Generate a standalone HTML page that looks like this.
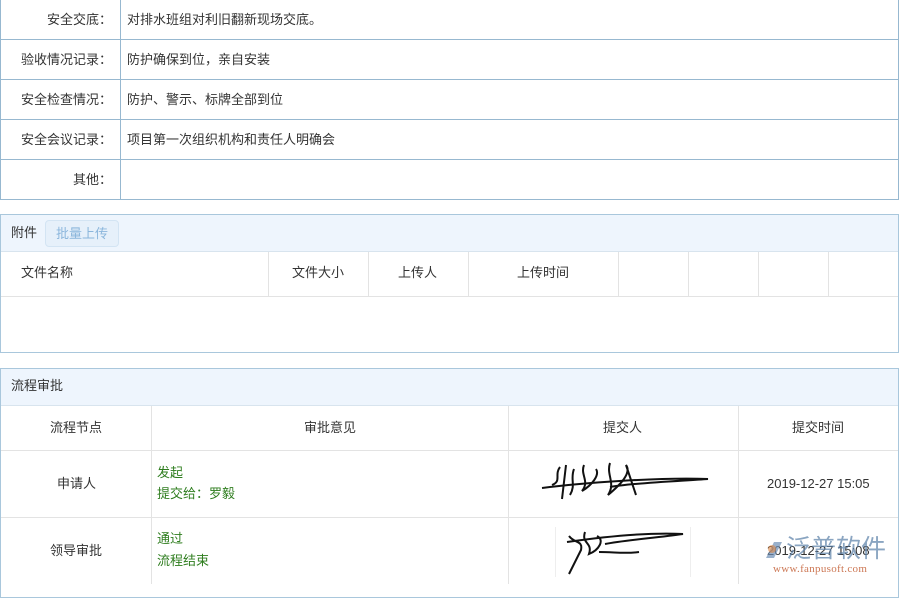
<!DOCTYPE html>
<html><head><meta charset="utf-8"><style>
*{margin:0;padding:0;box-sizing:border-box}
body{width:900px;height:584px;overflow:hidden;background:#fff;font-family:"Liberation Sans","Noto Sans CJK SC",sans-serif;font-size:13px;color:#333;position:relative}
.a{position:absolute}
.t{font-size:13px;line-height:16px;white-space:nowrap}
.hl{background:#97b8d0}
.gl{background:#e3e3e3}
.g{color:#2e7d1e}
</style></head><body>
<div class="a" style="left:0;top:0;width:899px;height:200px;border:1px solid #97b8d0;border-top:none"></div>
<div class="a hl" style="left:120px;top:0;width:1px;height:200px"></div>
<div class="a hl" style="left:0;top:39px;width:899px;height:1px"></div>
<div class="a hl" style="left:0;top:79px;width:899px;height:1px"></div>
<div class="a hl" style="left:0;top:119px;width:899px;height:1px"></div>
<div class="a hl" style="left:0;top:159px;width:899px;height:1px"></div>
<div class="a t" style="right:788px;top:12px">安全交底：</div>
<div class="a t" style="right:788px;top:52px">验收情况记录：</div>
<div class="a t" style="right:788px;top:92px">安全检查情况：</div>
<div class="a t" style="right:788px;top:132px">安全会议记录：</div>
<div class="a t" style="right:788px;top:172px">其他：</div>
<div class="a t" style="left:127px;top:12px">对排水班组对利旧翻新现场交底。</div>
<div class="a t" style="left:127px;top:52px">防护确保到位，亲自安装</div>
<div class="a t" style="left:127px;top:92px">防护、警示、标牌全部到位</div>
<div class="a t" style="left:127px;top:132px">项目第一次组织机构和责任人明确会</div>
<div class="a" style="left:0;top:214px;width:899px;height:139px;border:1px solid #a9c7dc"></div>
<div class="a" style="left:1px;top:215px;width:897px;height:36px;background:#eef5fd"></div>
<div class="a" style="left:1px;top:251px;width:897px;height:1px;background:#d8e4ee"></div>
<div class="a t" style="left:11px;top:225px">附件</div>
<div class="a t" style="left:45px;top:220px;width:74px;height:27px;line-height:25px;text-align:center;border:1px solid #d3e4f3;border-radius:4px;background:#e6f0fa;color:#8bb6dc">批量上传</div>
<div class="a gl" style="left:1px;top:296px;width:897px;height:1px"></div>
<div class="a gl" style="left:268px;top:252px;width:1px;height:44px"></div>
<div class="a gl" style="left:368px;top:252px;width:1px;height:44px"></div>
<div class="a gl" style="left:468px;top:252px;width:1px;height:44px"></div>
<div class="a gl" style="left:618px;top:252px;width:1px;height:44px"></div>
<div class="a gl" style="left:688px;top:252px;width:1px;height:44px"></div>
<div class="a gl" style="left:758px;top:252px;width:1px;height:44px"></div>
<div class="a gl" style="left:828px;top:252px;width:1px;height:44px"></div>
<div class="a t" style="left:21px;top:265px">文件名称</div>
<div class="a t" style="left:292px;top:265px">文件大小</div>
<div class="a t" style="left:398px;top:265px">上传人</div>
<div class="a t" style="left:517px;top:265px">上传时间</div>
<div class="a" style="left:0;top:368px;width:899px;height:230px;border:1px solid #a9c7dc"></div>
<div class="a" style="left:1px;top:369px;width:897px;height:36px;background:#eef5fd"></div>
<div class="a" style="left:1px;top:405px;width:897px;height:1px;background:#d8e4ee"></div>
<div class="a t" style="left:11px;top:378px">流程审批</div>
<div class="a gl" style="left:1px;top:450px;width:897px;height:1px"></div>
<div class="a gl" style="left:1px;top:517px;width:897px;height:1px"></div>
<div class="a gl" style="left:151px;top:406px;width:1px;height:178px"></div>
<div class="a gl" style="left:508px;top:406px;width:1px;height:178px"></div>
<div class="a gl" style="left:738px;top:406px;width:1px;height:178px"></div>
<div class="a t" style="left:50px;top:420px">流程节点</div>
<div class="a t" style="left:304px;top:420px">审批意见</div>
<div class="a t" style="left:603px;top:420px">提交人</div>
<div class="a t" style="left:792px;top:420px">提交时间</div>
<div class="a t" style="left:57px;top:476px">申请人</div>
<div class="a t" style="left:50px;top:543px">领导审批</div>
<div class="a t g" style="left:157px;top:465px">发起</div>
<div class="a t g" style="left:157px;top:486px">提交给：罗毅</div>
<div class="a t g" style="left:157px;top:531px">通过</div>
<div class="a t g" style="left:157px;top:553px">流程结束</div>
<div class="a t" style="left:767px;top:476px">2019-12-27 15:05</div>
<div class="a t" style="left:767px;top:543px">2019-12-27 15:08</div>
<div class="a" style="left:555px;top:527px;width:1px;height:50px;background:#eee"></div>
<div class="a" style="left:690px;top:527px;width:1px;height:50px;background:#eee"></div>
<svg class="a" style="left:540px;top:455px" width="175" height="55" viewBox="0 0 175 55" fill="none" stroke="#111" stroke-width="2">
<path d="M2 33 C40 28 120 22 168 24 C140 26 90 28 70 32"/>
<path d="M20 12 C14 20 22 26 12 30 M26 10 L22 44 M34 14 C30 24 36 30 30 40 M44 10 C40 20 50 26 42 36 C52 30 60 20 56 14 M70 8 C66 20 76 28 68 40 C80 30 92 18 86 10 L96 40"/>
</svg>
<svg class="a" style="left:555px;top:522px" width="140" height="55" viewBox="0 0 140 55" fill="none" stroke="#111" stroke-width="2">
<path d="M12 20 C40 16 90 10 128 12 C100 16 70 18 50 22"/>
<path d="M14 14 C20 22 28 18 26 28 L14 52 M30 10 C26 22 38 20 34 32 C44 28 50 18 42 14 M44 30 C60 30 70 32 84 30"/>
</svg>
<svg class="a" style="left:764px;top:540px" width="20" height="20" viewBox="0 0 20 20"><path d="M2 18 L10 2 L18 2 L10 18 Z" fill="#6d8fb5" opacity=".7"/><circle cx="8" cy="9" r="4" fill="#e08a4a" opacity=".6"/></svg>
<div class="a" style="left:786px;top:535px;font-size:25px;line-height:28px;color:#5a7fa8;opacity:.7">泛普软件</div>
<div class="a" style="left:773px;top:563px;font-size:11px;line-height:12px;color:#c0562a;opacity:.8;font-family:'Liberation Serif',serif;letter-spacing:.3px">www.fanpusoft.com</div>
</body></html>
